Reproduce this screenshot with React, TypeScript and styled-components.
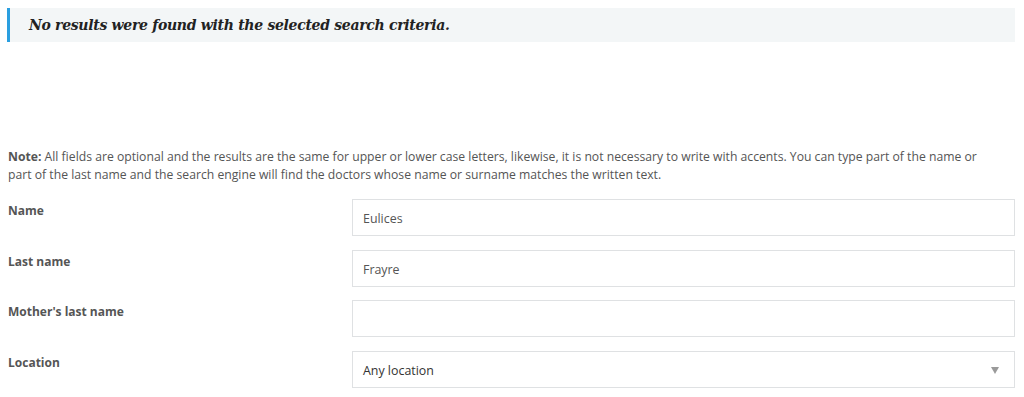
import React from "react";
import styled, { createGlobalStyle } from "styled-components";

const fields = [
  { label: "Name", value: "Eulices" },
  { label: "Last name", value: "Frayre" },
  { label: "Mother's last name", value: "" },
];

const GlobalStyle = createGlobalStyle`
  body {
    margin: 0;
    background: #ffffff;
    font-family: "Open Sans", "Liberation Sans", sans-serif;
  }
`;

const App = () => {
  return (
    <Page>
      <GlobalStyle />
      <Alert>No results were found with the selected search criteria.</Alert>
      <Form>
        <Note>
          <strong>Note:</strong> All fields are optional and the results are the same for upper or
          lower case letters, likewise, it is not necessary to write with accents. You can type part
          of the name or part of the last name and the search engine will find the doctors whose name
          or surname matches the written text.
        </Note>
        {fields.map(({ label, value }) => (
          <Row key={label}>
            <Label>{label}</Label>
            <Input type="text" defaultValue={value} />
          </Row>
        ))}
        <Row>
          <Label>Location</Label>
          <Select>
            <span>Any location</span>
            <Caret />
          </Select>
        </Row>
      </Form>
    </Page>
  );
};

export default App;

const Page = styled.div`
  width: 1024px;
  height: 397px;
  padding: 8px 9px 0 7px;
  box-sizing: border-box;
  overflow: hidden;
`;

const Alert = styled.div`
  height: 34px;
  box-sizing: border-box;
  display: flex;
  align-items: center;
  padding-left: 19px;
  border-left: 3px solid #2a9fe0;
  background-color: #f3f6f7;

  font-family: "DejaVu Serif", "Liberation Serif", serif;
  font-style: italic;
  font-weight: 700;
  font-size: 14px;
  letter-spacing: -0.3px;
  color: #222222;
`;

const Form = styled.div`
  padding: 106px 0 0 1px;
`;

const Note = styled.p`
  margin: 0 0 15px;
  padding-right: 36px;
  font-size: 12.2px;
  line-height: 18px;
  color: #555555;

  strong {
    font-weight: 700;
  }
`;

const Row = styled.div`
  display: grid;
  grid-template-columns: 344px 1fr;
  height: 50.5px;
`;

const Label = styled.div`
  padding-top: 4px;
  font-size: 12px;
  font-weight: 700;
  line-height: 16px;
  color: #555555;
`;

const Input = styled.input`
  height: 37px;
  box-sizing: border-box;
  border: 1px solid #dfe1e3;
  border-radius: 0;
  padding: 2px 10px 0;
  outline: none;

  font-family: "Open Sans", "Liberation Sans", sans-serif;
  font-size: 12.4px;
  color: #555555;
`;

const Select = styled.div`
  height: 37px;
  box-sizing: border-box;
  border: 1px solid #dfe1e3;
  display: flex;
  align-items: center;
  justify-content: space-between;
  padding: 2px 15px 0 10px;

  font-size: 12.4px;
  color: #333333;
`;

const Caret = styled.span`
  width: 0;
  height: 0;
  border-left: 4px solid transparent;
  border-right: 4px solid transparent;
  border-top: 7px solid #9a9a9a;
`;
